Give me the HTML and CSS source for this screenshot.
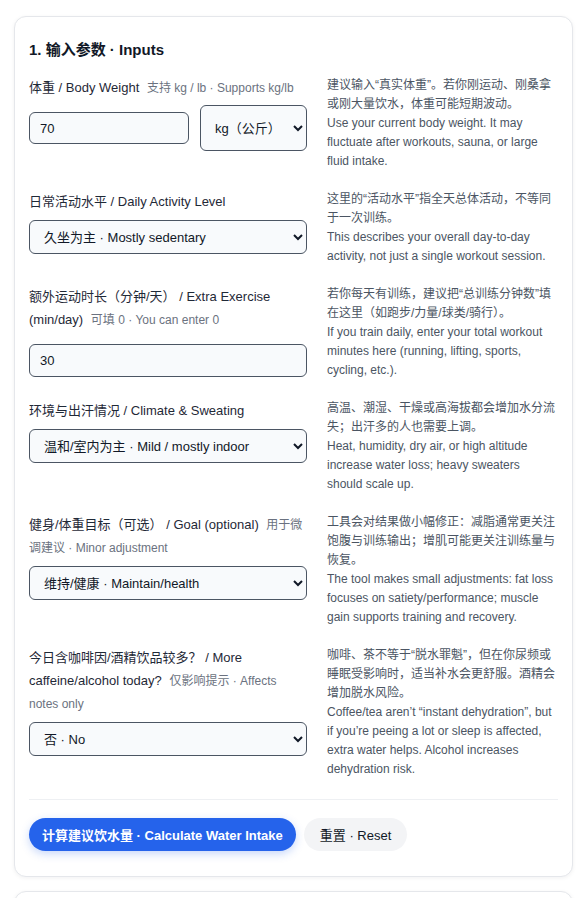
FILE: index.html
```html
<!DOCTYPE html>
<html lang="zh-CN">
<head>
    <meta charset="UTF-8">
    <title>每日饮水量计算 · Water Intake</title>
    <link rel="stylesheet" href="styles.css">
</head>
<body>
    <div class="card">
        <h2>1. 输入参数 · Inputs</h2>

        <div class="rows">
            <div class="row">
                <div class="left">
                    <label for="weight">体重 / Body Weight <span class="hint">支持 kg / lb · Supports kg/lb</span></label>
                    <div class="inline">
                        <input type="text" id="weight" value="70">
                        <select id="unit" class="unit">
                            <option>kg（公斤）</option>
                            <option>lb（磅）</option>
                        </select>
                    </div>
                </div>
                <p class="note">建议输入“真实体重”。若你刚运动、刚桑拿或刚大量饮水，体重可能短期波动。<br>Use your current body weight. It may fluctuate after workouts, sauna, or large fluid intake.</p>
            </div>

            <div class="row">
                <div class="left">
                    <label for="activity">日常活动水平 / Daily Activity Level</label>
                    <select id="activity">
                        <option>久坐为主 · Mostly sedentary</option>
                    </select>
                </div>
                <p class="note">这里的“活动水平”指全天总体活动，不等同于一次训练。<br>This describes your overall day-to-day activity, not just a single workout session.</p>
            </div>

            <div class="row">
                <div class="left">
                    <label for="exercise">额外运动时长（分钟/天） / Extra Exercise (min/day) <span class="hint">可填 0 · You can enter 0</span></label>
                    <input type="text" id="exercise" class="spaced" value="30">
                </div>
                <p class="note">若你每天有训练，建议把“总训练分钟数”填在这里（如跑步/力量/球类/骑行）。<br>If you train daily, enter your total workout minutes here (running, lifting, sports, cycling, etc.).</p>
            </div>

            <div class="row">
                <div class="left">
                    <label for="climate">环境与出汗情况 / Climate &amp; Sweating</label>
                    <select id="climate">
                        <option>温和/室内为主 · Mild / mostly indoor</option>
                    </select>
                </div>
                <p class="note">高温、潮湿、干燥或高海拔都会增加水分流失；出汗多的人也需要上调。<br>Heat, humidity, dry air, or high altitude increase water loss; heavy sweaters should scale up.</p>
            </div>

            <div class="row">
                <div class="left">
                    <label for="goal">健身/体重目标（可选） / Goal (optional) <span class="hint">用于微调建议 · Minor adjustment</span></label>
                    <select id="goal">
                        <option>维持/健康 · Maintain/health</option>
                    </select>
                </div>
                <p class="note">工具会对结果做小幅修正：减脂通常更关注饱腹与训练输出；增肌可能更关注训练量与恢复。<br>The tool makes small adjustments: fat loss focuses on satiety/performance; muscle gain supports training and recovery.</p>
            </div>

            <div class="row">
                <div class="left">
                    <label for="caffeine">今日含咖啡因/酒精饮品较多？ / More caffeine/alcohol today? <span class="hint">仅影响提示 · Affects notes only</span></label>
                    <select id="caffeine">
                        <option>否 · No</option>
                        <option>是 · Yes</option>
                    </select>
                </div>
                <p class="note">咖啡、茶不等于“脱水罪魁”，但在你尿频或睡眠受影响时，适当补水会更舒服。酒精会增加脱水风险。<br>Coffee/tea aren’t “instant dehydration”, but if you’re peeing a lot or sleep is affected, extra water helps. Alcohol increases dehydration risk.</p>
            </div>
        </div>

        <div class="actions">
            <button class="primary">计算建议饮水量 · Calculate Water Intake</button>
            <button class="ghost">重置 · Reset</button>
        </div>
    </div>

    <div class="card next"></div>
</body>
</html>
```

FILE: styles.css
```css
body {
    margin: 0;
    padding: 16px 14px;
    background-color: #ffffff;
    color: #111827;
    font-family: "Liberation Sans", Arial, "Noto Sans CJK SC", sans-serif;
}
.card {
    background-color: white;
    border: 1px solid #e5e7eb;
    border-radius: 12px;
    box-shadow: 0 1px 4px rgba(15, 23, 42, 0.06);
    padding: 23px 14px 25px;
}
.card.next {
    margin-top: 14px;
    height: 40px;
    padding: 0;
}
h2 {
    margin: 0 0 16px;
    font-size: 15px;
    line-height: 20px;
    font-weight: bold;
    color: #111827;
}
.rows {
    display: flex;
    flex-direction: column;
    gap: 19px;
}
.row {
    display: grid;
    grid-template-columns: 278px 1fr;
    column-gap: 20px;
}
label {
    display: block;
    font-size: 13px;
    line-height: 23px;
    color: #1f2937;
    margin-bottom: 7px;
}
.hint {
    font-size: 12px;
    line-height: 1;
    color: #6b7280;
    margin-left: 4px;
}
.note {
    margin: 0;
    font-size: 12px;
    line-height: 19px;
    color: #4b5563;
}
input, select {
    box-sizing: border-box;
    width: 100%;
    height: 34px;
    border: 1px solid #4b5563;
    border-radius: 6px;
    background-color: #f8fafc;
    color: #111827;
    font-family: "Liberation Sans", Arial, "Noto Sans CJK SC", sans-serif;
    font-size: 13px;
    padding: 0 10px;
    margin: 0;
}
input {
    height: 33px;
}
input.spaced {
    margin-top: 6px;
}
.inline {
    display: flex;
    align-items: center;
    gap: 11px;
    margin-top: -1px;
}
.inline input {
    flex: 1;
    height: 32px;
}
.inline .unit {
    width: 107px;
    flex: none;
    height: 46px;
}
.actions {
    margin-top: 20px;
    border-top: 1px solid #eef0f3;
    padding-top: 18px;
    display: flex;
    gap: 8px;
}
button {
    height: 33px;
    border: none;
    border-radius: 17px;
    padding: 0 15px;
    font-family: "Liberation Sans", Arial, "Noto Sans CJK SC", sans-serif;
    font-size: 13px;
    cursor: pointer;
}
.primary {
    background-color: #2563eb;
    color: white;
    font-weight: bold;
    padding: 0 13px;
    box-shadow: 0 3px 8px rgba(37, 99, 235, 0.25);
}
.ghost {
    background-color: #f3f4f6;
    color: #111827;
    padding: 0 16px;
}
```
